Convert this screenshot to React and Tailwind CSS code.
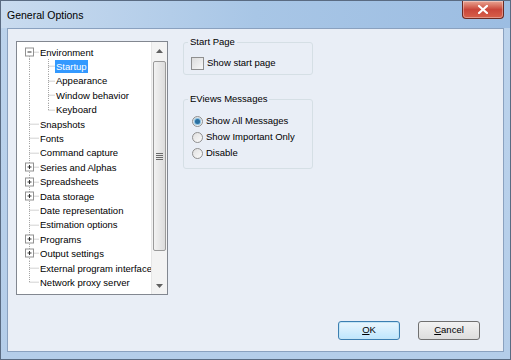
import React from 'react';

const font = { fontFamily: '"Liberation Sans", Arial, sans-serif' };

const items = [
    { name: 'Environment', level: 0, exp: 'minus' },
    { name: 'Startup', level: 1, selected: true },
    { name: 'Appearance', level: 1 },
    { name: 'Window behavior', level: 1 },
    { name: 'Keyboard', level: 1, lastChild: true },
    { name: 'Snapshots', level: 0 },
    { name: 'Fonts', level: 0 },
    { name: 'Command capture', level: 0 },
    { name: 'Series and Alphas', level: 0, exp: 'plus' },
    { name: 'Spreadsheets', level: 0, exp: 'plus' },
    { name: 'Data storage', level: 0, exp: 'plus' },
    { name: 'Date representation', level: 0 },
    { name: 'Estimation options', level: 0 },
    { name: 'Programs', level: 0, exp: 'plus' },
    { name: 'Output settings', level: 0, exp: 'plus' },
    { name: 'External program interface', level: 0 },
    { name: 'Network proxy server', level: 0 },
];

const DOT = '#a5a5a5';

function Connector({ item, first, last }) {
    const w = item.level === 0 ? 22 : 38;
    const h = 14.4;
    const cy = 7.2;
    const rootX = 12.5;
    const childX = 31.5;
    return (
        <svg width={w} height={h} className="shrink-0 block">
            <line x1={rootX} x2={rootX} y1={first ? cy : 0} y2={last ? cy : h} stroke={DOT} strokeDasharray="1 1" />
            {item.level === 0 && <line x1={rootX} x2={w} y1={cy} y2={cy} stroke={DOT} strokeDasharray="1 1" />}
            {item.level === 1 && (
                <>
                    <line x1={childX} x2={childX} y1={0} y2={item.lastChild ? cy : h} stroke={DOT} strokeDasharray="1 1" />
                    <line x1={childX} x2={w} y1={cy} y2={cy} stroke={DOT} strokeDasharray="1 1" />
                </>
            )}
            {item.exp && (
                <>
                    <rect x={8.5} y={3} width={8} height={8} fill="#fff" stroke="#919191" />
                    <line x1={10.5} x2={14.5} y1={7} y2={7} stroke="#333" />
                    {item.exp === 'plus' && <line x1={12.5} x2={12.5} y1={5} y2={9} stroke="#333" />}
                </>
            )}
        </svg>
    );
}

function Scrollbar() {
    return (
        <div className="w-[16px] shrink-0 flex flex-col bg-[#f3f3f3] border-l border-[#e6e6e6]">
            <div className="h-[17px] flex items-center justify-center">
                <svg width="7" height="4"><path d="M0 4 L3.5 0 L7 4 Z" fill="#606060" /></svg>
            </div>
            <div className="flex-1 flex flex-col px-[1px] py-[2px]">
                <div className="h-[190px] rounded-[2px] border border-[#9a9a9a] bg-gradient-to-r from-[#f2f2f2] to-[#dcdcdc] flex items-center justify-center">
                    <div className="flex flex-col gap-[1px]">
                        <div className="w-[7px] h-[1px] bg-[#6a6a6a]" />
                        <div className="w-[7px] h-[1px] bg-[#6a6a6a]" />
                        <div className="w-[7px] h-[1px] bg-[#6a6a6a]" />
                        <div className="w-[7px] h-[1px] bg-[#6a6a6a]" />
                    </div>
                </div>
            </div>
            <div className="h-[17px] flex items-center justify-center">
                <svg width="7" height="4"><path d="M0 0 L3.5 4 L7 0 Z" fill="#606060" /></svg>
            </div>
        </div>
    );
}

function Tree() {
    return (
        <div className="w-[152px] h-[254px] border border-[#828790] bg-white flex shrink-0">
            <div className="flex-1 overflow-hidden pt-[3px] text-[9.5px] text-black">
                {items.map((item, i) => (
                    <div key={item.name} className="flex items-center h-[14.4px] whitespace-nowrap">
                        <Connector item={item} first={i === 0} last={i === items.length - 1} />
                        <span className={item.selected ? 'bg-[#3399ff] text-white px-[1px] leading-[13px]' : 'px-[1px] leading-[13px]'}>
                            {item.name}
                        </span>
                    </div>
                ))}
            </div>
            <Scrollbar />
        </div>
    );
}

function GroupBox({ title, children, className }) {
    return (
        <fieldset className={'border border-[#d5dfe5] rounded-[3px] px-[6px] ' + className}>
            <legend className="px-[2px] -ml-[2px] text-[9.5px] text-black leading-[12px]">{title}</legend>
            {children}
        </fieldset>
    );
}

function Radio({ checked, label }) {
    return (
        <div className="flex items-center gap-[3px] h-[16px]">
            <div className="w-[11px] h-[11px] rounded-full border border-[#8f8f8f] bg-gradient-to-br from-[#e0e0e0] to-[#fbfbfb] flex items-center justify-center">
                {checked && <div className="w-[5px] h-[5px] rounded-full bg-[#2a6fa0] shadow-[0_0_1px_1px_#7fbbe0]" />}
            </div>
            <span className="text-[9.5px] text-black">{label}</span>
        </div>
    );
}

export default function App() {
    return (
        <div style={font} className="w-[511px] h-[360px] relative flex flex-col border border-[#5a6b82] bg-gradient-to-b from-[#bcd3ec] to-[#b4cde9] overflow-hidden">
            {/* title bar */}
            <div className="h-[27px] flex items-start justify-between bg-gradient-to-r from-[#c9dbef] via-[#a8c6e6] to-[#9cbde2]">
                <span className="text-[10.5px] text-black pl-[6px] pt-[7px]">General Options</span>
                <button className="mr-[6px] w-[42px] h-[18px] rounded-b-[4px] border border-t-0 border-[#6b2a22] bg-gradient-to-b from-[#e8a493] via-[#c9463a] to-[#d7604a] flex items-center justify-center shadow-[inset_0_0_0_1px_rgba(255,255,255,0.35)]">
                    <svg width="10" height="9" viewBox="0 0 10 9">
                        <path d="M1 1 L9 8 M9 1 L1 8" stroke="#fff" strokeWidth="2.2" strokeLinecap="square" />
                    </svg>
                </button>
            </div>
            {/* client area */}
            <div className="flex-1 mx-[6px] mb-[7px] border border-[#8aa1bf] bg-[#e9eef6] flex flex-col">
                <div className="flex pl-[8px] pt-[12px] gap-[15px]">
                    <Tree />
                    <div className="flex flex-col gap-[18px] -mt-[5px]">
                        <GroupBox title="Start Page" className="w-[130px] h-[39px]">
                            <div className="flex items-center gap-[3px] pt-[8px] pl-[1px]">
                                <div className="w-[13px] h-[13px] border border-[#8f8f8f] bg-gradient-to-br from-[#dcdcdc] to-[#f8f8f8]" />
                                <span className="text-[9.5px] text-black">Show start page</span>
                            </div>
                        </GroupBox>
                        <GroupBox title="EViews Messages" className="w-[130px] h-[76px]">
                            <div className="flex flex-col pt-[8px] pl-[2px]">
                                <Radio checked label="Show All Messages" />
                                <Radio label="Show Important Only" />
                                <Radio label="Disable" />
                            </div>
                        </GroupBox>
                    </div>
                </div>
                <div className="flex-1" />
                <div className="flex justify-end gap-[18px] pr-[23px] pb-[11px]">
                    <button className="w-[62px] h-[19px] rounded-[3px] border border-[#3c7fb1] bg-gradient-to-b from-[#eaf6fd] to-[#bee6fd] text-[9.5px] text-black shadow-[inset_0_0_0_1px_#c4e5f6]">
                        <span className="underline">O</span>K
                    </button>
                    <button className="w-[62px] h-[19px] rounded-[3px] border border-[#707070] bg-gradient-to-b from-[#f2f2f2] to-[#dddddd] text-[9.5px] text-black">
                        <span className="underline">C</span>ancel
                    </button>
                </div>
            </div>
        </div>
    );
}
